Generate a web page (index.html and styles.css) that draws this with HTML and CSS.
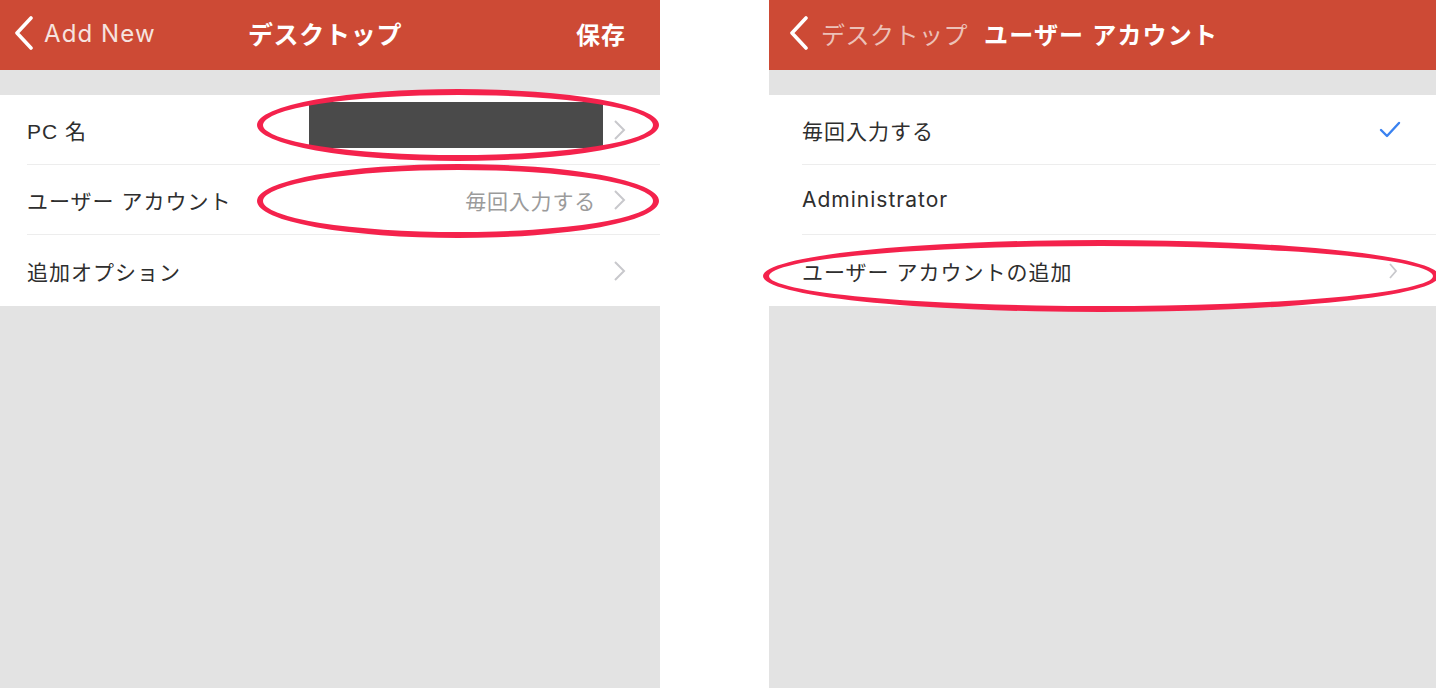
FILE: index.html
```html
<!DOCTYPE html>
<html lang="ja">
<head>
<meta charset="utf-8">
<title>デスクトップ</title>
<link rel="stylesheet" href="styles.css">
</head>
<body>
<div class="stage">
  <section class="phone left">
    <header class="nav">
      <div class="nav-left">
        <svg class="back" width="20" height="34" viewBox="0 0 20 34"><path d="M17 2 L3 17 L17 32" fill="none" stroke="#fff" stroke-width="3.6" stroke-linecap="round" stroke-linejoin="round"/></svg>
        <span class="back-label latin-nav">Add New</span>
      </div>
      <div class="nav-title">デスクトップ</div>
      <div class="nav-right">保存</div>
    </header>
    <div class="spacer"></div>
    <ul class="list">
      <li class="row">
        <span class="label">PC 名</span>
        <span class="redact"></span>
        <svg class="chev" width="13" height="22" viewBox="0 0 13 22"><path d="M2 2 L11 11 L2 20" fill="none" stroke="#c8c8cc" stroke-width="2"/></svg>
      </li>
      <li class="row">
        <span class="label">ユーザー アカウント</span>
        <span class="value">毎回入力する</span>
        <svg class="chev" width="13" height="22" viewBox="0 0 13 22"><path d="M2 2 L11 11 L2 20" fill="none" stroke="#c8c8cc" stroke-width="2"/></svg>
      </li>
      <li class="row last">
        <span class="label">追加オプション</span>
        <svg class="chev" width="13" height="22" viewBox="0 0 13 22"><path d="M2 2 L11 11 L2 20" fill="none" stroke="#c8c8cc" stroke-width="2"/></svg>
      </li>
    </ul>
    <div class="fill"></div>
  </section>

  <section class="phone right">
    <header class="nav nav-sub">
      <svg class="back" width="20" height="34" viewBox="0 0 20 34"><path d="M17 2 L3 17 L17 32" fill="none" stroke="#fff" stroke-width="3.6" stroke-linecap="round" stroke-linejoin="round"/></svg>
      <span class="back-label light">デスクトップ</span>
      <span class="sub-title">ユーザー アカウント</span>
    </header>
    <div class="spacer"></div>
    <ul class="list">
      <li class="row">
        <span class="label">毎回入力する</span>
        <svg class="check" width="22" height="17" viewBox="0 0 22 17"><path d="M2 9 L8 15 L20 2" fill="none" stroke="#3a82f0" stroke-width="2.4" stroke-linecap="round" stroke-linejoin="round"/></svg>
      </li>
      <li class="row">
        <span class="label latin">Administrator</span>
      </li>
      <li class="row last">
        <span class="label">ユーザー アカウントの追加</span>
        <svg class="chev small" width="10" height="18" viewBox="0 0 10 18"><path d="M2 2 L8 9 L2 16" fill="none" stroke="#c8c8cc" stroke-width="1.8"/></svg>
      </li>
    </ul>
    <div class="fill"></div>
  </section>

  <span class="mark mark-1"></span>
  <span class="mark mark-2"></span>
  <span class="mark mark-3"></span>
</div>
</body>
</html>
```

FILE: styles.css
```css
* { box-sizing: border-box; }

html, body {
  margin: 0;
  padding: 0;
  background: #ffffff;
}

body {
  font-family: "Liberation Sans", "Noto Sans CJK JP", sans-serif;
}

.stage {
  position: relative;
  display: flex;
  gap: 109px;
  width: 1436px;
  height: 688px;
  overflow: hidden;
}

.phone {
  display: flex;
  flex-direction: column;
  height: 688px;
  background: #e3e3e3;
}

.phone.left { width: 660px; }
.phone.right { flex: 1; }

.nav {
  height: 70px;
  background: #cd4a35;
  color: #ffffff;
  display: grid;
  grid-template-columns: 1fr auto 1fr;
  align-items: center;
  padding: 0 34px 4px 14px;
  font-size: 24px;
}

.nav-left {
  display: flex;
  align-items: center;
  gap: 10px;
}

.back { display: block; flex: none; }

.back-label {
  font-size: 24px;
  color: #f6e3df;
}

.back-label.latin-nav {
  font-family: "Inter", "Liberation Sans", sans-serif;
  font-size: 24px;
  letter-spacing: 1.1px;
}

.nav-title {
  font-weight: 700;
  font-size: 25px;
  letter-spacing: 0.7px;
  margin-left: 10px;
}

.nav-right {
  justify-self: end;
  font-weight: 700;
  font-size: 24px;
  letter-spacing: 1px;
}

.nav-sub {
  display: flex;
  align-items: center;
  padding-left: 20px;
}

.nav-sub .back-label {
  margin-left: 12px;
  color: #ecc1b8;
  letter-spacing: 0.5px;
}

.sub-title {
  margin-left: 16px;
  font-weight: 700;
  letter-spacing: 1.2px;
}

.spacer { height: 25px; }

.list {
  list-style: none;
  margin: 0;
  padding: 0;
  background: #ffffff;
}

.left .list { padding-left: 27px; }
.right .list { padding-left: 33px; }

.row {
  height: 70px;
  display: flex;
  align-items: center;
  border-bottom: 1px solid #ededed;
  font-size: 21px;
  color: #2e2e2e;
}

.left .row { padding-right: 34px; }
.right .row { padding-right: 36px; }

.row.last { border-bottom: none; height: 71px; }

.label {
  flex: 1;
  letter-spacing: 1px;
}

.label.latin {
  font-family: "Inter", "Liberation Sans", sans-serif;
  font-size: 21px;
  letter-spacing: 1px;
}

.value {
  color: #9b9b9b;
  font-size: 21px;
  letter-spacing: 0.8px;
  margin-right: 17px;
}

.redact {
  width: 294px;
  height: 46px;
  background: #4a4a4a;
  margin-right: 10px;
  margin-bottom: 9px;
}

.chev { display: block; flex: none; }
.chev.small { margin-right: 2px; }

.check { display: block; flex: none; margin-right: -1px; }

.fill { flex: 1; }

.mark {
  position: absolute;
  border: 6px solid #f4224c;
  border-radius: 50%;
  pointer-events: none;
}

.mark-1 { left: 257px; top: 89px; width: 402px; height: 72px; }
.mark-2 { left: 257px; top: 164px; width: 402px; height: 74px; }
.mark-3 { left: 763px; top: 240px; width: 676px; height: 72px; }
```
